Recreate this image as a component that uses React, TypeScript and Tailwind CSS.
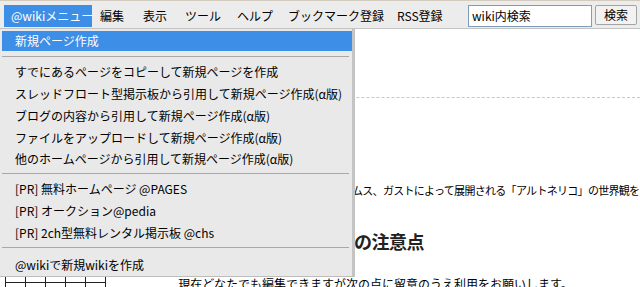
import React from 'react';

const topMenu = [
  { label: '編集', w: 'w-[43px]' },
  { label: '表示', w: 'w-[42px]' },
  { label: 'ツール', w: 'w-[52px]' },
  { label: 'ヘルプ', w: 'w-[51px]' },
  { label: 'ブックマーク登録', w: 'w-[109px]' },
  { label: 'RSS登録', w: 'w-[71px]' },
];

const createItems = [
  'すでにあるページをコピーして新規ページを作成',
  'スレッドフロート型掲示板から引用して新規ページ作成(α版)',
  'ブログの内容から引用して新規ページ作成(α版)',
  'ファイルをアップロードして新規ページ作成(α版)',
  '他のホームページから引用して新規ページ作成(α版)',
];

const prItems = ['[PR] 無料ホームページ @PAGES', '[PR] オークション@pedia', '[PR] 2ch型無料レンタル掲示板 @chs'];

function MenuRow({ label, active }: { label: string; active?: boolean }) {
  return (
    <div
      className={
        active
          ? 'ml-[2px] flex h-[20px] items-center bg-[#3d8ee6] pl-[13px] text-white'
          : 'ml-[2px] flex h-[22px] items-center pl-[13px] text-black'
      }
    >
      <span className="whitespace-nowrap">{label}</span>
    </div>
  );
}

function Separator({ className }: { className: string }) {
  return (
    <div className={className}>
      <div className="ml-[2px] mr-[3px] border-t border-[#a8a8a8]" />
    </div>
  );
}

export default function App() {
  return (
    <div className="relative h-[287px] w-[640px] overflow-hidden bg-white font-['Noto_Sans_CJK_JP',sans-serif] text-[12px] leading-none text-black">
      {/* menu bar */}
      <div className="flex h-[29px] items-start border-y border-t-[#d3ccbe] border-b-[#c4c4c4] bg-[#ececec] pt-[4px]">
        <div className="ml-[4px] flex h-[22px] w-[88px] items-center bg-[#3d8ee6] pl-[7px] text-white whitespace-nowrap">
          @wikiメニュー
        </div>
        {topMenu.map((m) => (
          <div key={m.label} className={`flex h-[22px] items-center pl-[8px] whitespace-nowrap ${m.w}`}>
            {m.label}
          </div>
        ))}
        <div className="ml-[8px] flex h-[22px] w-[124px] items-center border border-[#7f9db9] bg-white pl-[3px]">
          wiki内検索
        </div>
        <div className="ml-[3px] flex h-[20px] w-[42px] items-center justify-center rounded-[2px] border border-[#a3a3a3] bg-[#f2f2f2]">
          検索
        </div>
      </div>

      {/* page underneath */}
      <div className="flex">
        <div className="w-[166px] shrink-0 pl-[5px] pt-[235px]">
          <div className="grid w-[101px] grid-cols-5 border-l border-t border-[#222]">
            {Array.from({ length: 10 }).map((_, i) => (
              <div key={i} className="h-[18px] w-[20px] border-b border-r border-[#222]" />
            ))}
          </div>
        </div>
        <div className="flex min-w-0 flex-1 flex-col">
          <div className="mt-[68px] border-t border-dashed border-[#c8c8c8]" />
          <div className="mt-[84px] flex h-[16px] items-center whitespace-nowrap text-[11px] tracking-[-0.7px]">
            <div className="flex w-[186px] shrink-0 justify-end">バンダイナムコゲー</div>
            <span>ムス、ガストによって展開される「アルトネリコ」の世界観を</span>
          </div>
          <div className="mt-[31px] flex h-[24px] items-center whitespace-nowrap text-[18px] font-bold tracking-[-0.5px] text-[#222]">
            <div className="flex w-[188px] shrink-0 justify-end">利用上</div>
            <span>の注意点</span>
          </div>
          <div className="mt-[23px] flex h-[16px] items-center whitespace-nowrap">
            <div className="flex w-[180px] shrink-0 justify-end">現在どなたでも編集できますが</div>
            <span>次の点に留意のうえ利用をお願いします。</span>
          </div>
        </div>
      </div>

      {/* open dropdown */}
      <div className="absolute left-0 top-[29px] flex h-[248px] w-[355px] flex-col border-b border-r-[3px] border-b-[#bdbdbd] border-r-[#c4c4c4] bg-[#e9e9e9] pt-[2px]">
        <MenuRow label="新規ページ作成" active />
        <Separator className="h-[10px] pt-[5px]" />
        {createItems.map((t) => (
          <MenuRow key={t} label={t} />
        ))}
        <Separator className="h-[8px] pt-[3px]" />
        {prItems.map((t) => (
          <MenuRow key={t} label={t} />
        ))}
        <Separator className="h-[10px] pt-[3px]" />
        <MenuRow label="@wikiで新規wikiを作成" />
      </div>
    </div>
  );
}
